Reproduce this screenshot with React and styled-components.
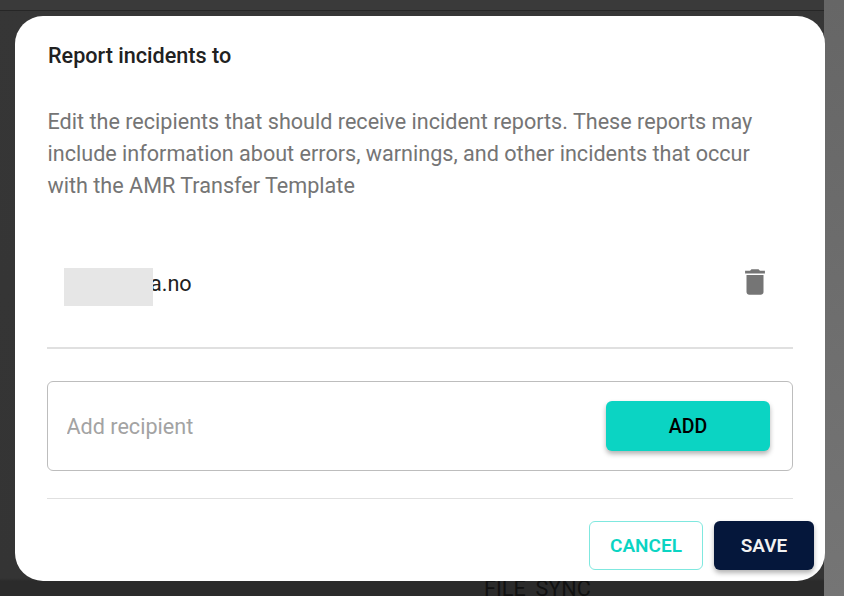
import React from "react";
import styled, { createGlobalStyle } from "styled-components";

const GlobalStyle = createGlobalStyle`
  html, body {
    margin: 0;
    padding: 0;
    background: #2e2e2e;
    font-family: Roboto, "Liberation Sans", sans-serif;
  }
`;

const Page = styled.div`
  position: relative;
  width: 844px;
  height: 596px;
  overflow: hidden;
  display: flex;
`;

const Backdrop = styled.div`
  flex: 1;
  display: flex;
  flex-direction: column;
  background: linear-gradient(180deg, #363636 0, #343434 97%, #2b2b2b 97.5%);
`;

const TopBar = styled.div`
  height: 10px;
  background: #3a3a3a;
  border-bottom: 1px solid #262626;
`;

const BehindText = styled.div`
  margin: auto 0 -5px 484px;
  font-size: 21.6px;
  line-height: 24px;
  color: #111111;
`;

const SideStrip = styled.div`
  width: 20px;
  background: linear-gradient(180deg, #666666, #757575);
`;

const Dialog = styled.div`
  position: absolute;
  left: 15px;
  top: 16px;
  width: 810px;
  height: 565px;
  box-sizing: border-box;
  background: #ffffff;
  border-radius: 28px;
  padding: 26px 32px 11px 32px;
  display: flex;
  flex-direction: column;
  & > * {
    flex-shrink: 0;
  }
`;

const Title = styled.h2`
  margin: 0 0 0 1px;
  font-size: 21.6px;
  line-height: 28px;
  font-weight: 500;
  color: #212121;
`;

const Description = styled.p`
  margin: 36px 0 0 0.5px;
  font-size: 21.6px;
  line-height: 32px;
  color: #757575;
`;

const RecipientRow = styled.div`
  margin-top: 36px;
  height: 111px;
  box-sizing: border-box;
  padding: 30px 21px 0 17px;
  display: flex;
  align-items: flex-start;
  justify-content: space-between;
  border-bottom: 2px solid #e0e0e0;
`;

const Email = styled.div`
  display: flex;
  align-items: flex-start;
  font-size: 21.6px;
  line-height: 32px;
  color: #212121;
`;

const Redaction = styled.span`
  position: relative;
  z-index: 1;
  width: 89px;
  height: 38px;
  background: #e6e6e6;
`;

const Address = styled.span`
  margin-left: -3px;
`;

const IconButton = styled.button`
  border: 0;
  padding: 0;
  margin-top: -3px;
  background: none;
  color: #757575;
  display: flex;
`;

const AddBox = styled.div`
  margin-top: 32px;
  height: 90px;
  box-sizing: border-box;
  padding: 0 22px 0 18.5px;
  border: 1px solid #bdbdbd;
  border-radius: 6px;
  display: flex;
  align-items: center;
  justify-content: space-between;
`;

const AddInput = styled.input`
  flex: 1;
  border: 0;
  outline: 0;
  padding: 0;
  font: 400 21.6px Roboto, sans-serif;
  color: #212121;
  &::placeholder {
    color: #a3a3a3;
    opacity: 1;
  }
`;

const Button = styled.button`
  box-sizing: border-box;
  border-radius: 6px;
  font: 500 19.5px Roboto, sans-serif;
  display: flex;
  align-items: center;
  justify-content: center;
`;

const AddButton = styled(Button)`
  width: 164px;
  height: 50px;
  border: 0;
  background: #0bd4c3;
  color: #000000;
  box-shadow: 0 3px 5px rgba(0, 0, 0, 0.3);
`;

const Divider = styled.div`
  margin-top: 27px;
  height: 1px;
  background: #e0e0e0;
`;

const Actions = styled.div`
  margin: 22px -21px 0 0;
  display: flex;
  justify-content: flex-end;
  gap: 11px;
`;

const CancelButton = styled(Button)`
  width: 114px;
  height: 49px;
  border: 1px solid #7fe8df;
  background: #ffffff;
  color: #0bd4c3;
  font-weight: 600;
  font-size: 19px;
`;

const SaveButton = styled(Button)`
  width: 100px;
  height: 49px;
  border: 0;
  background: #05173b;
  color: #f2f2f2;
  font-weight: 600;
  font-size: 19px;
  box-shadow: 0 3px 5px rgba(0, 0, 0, 0.3);
`;

const TrashIcon = () => (
  <svg width="34" height="34" viewBox="0 0 24 24" fill="currentColor">
    <path d="M6 19c0 1.1.9 2 2 2h8c1.1 0 2-.9 2-2V7H6v12zM19 4h-3.5l-1-1h-5l-1 1H5v2h14V4z" />
  </svg>
);

const App = () => {
  return (
    <Page>
      <GlobalStyle />
      <Backdrop>
        <TopBar />
        <BehindText>FILE_SYNC</BehindText>
      </Backdrop>
      <SideStrip />
      <Dialog>
        <Title>Report incidents to</Title>
        <Description>
          Edit the recipients that should receive incident reports. These reports may
          include information about errors, warnings, and other incidents that occur
          with the AMR Transfer Template
        </Description>
        <RecipientRow>
          <Email>
            <Redaction />
            <Address>a.no</Address>
          </Email>
          <IconButton aria-label="Delete">
            <TrashIcon />
          </IconButton>
        </RecipientRow>
        <AddBox>
          <AddInput placeholder="Add recipient" />
          <AddButton>ADD</AddButton>
        </AddBox>
        <Divider />
        <Actions>
          <CancelButton>CANCEL</CancelButton>
          <SaveButton>SAVE</SaveButton>
        </Actions>
      </Dialog>
    </Page>
  );
};

export default App;
